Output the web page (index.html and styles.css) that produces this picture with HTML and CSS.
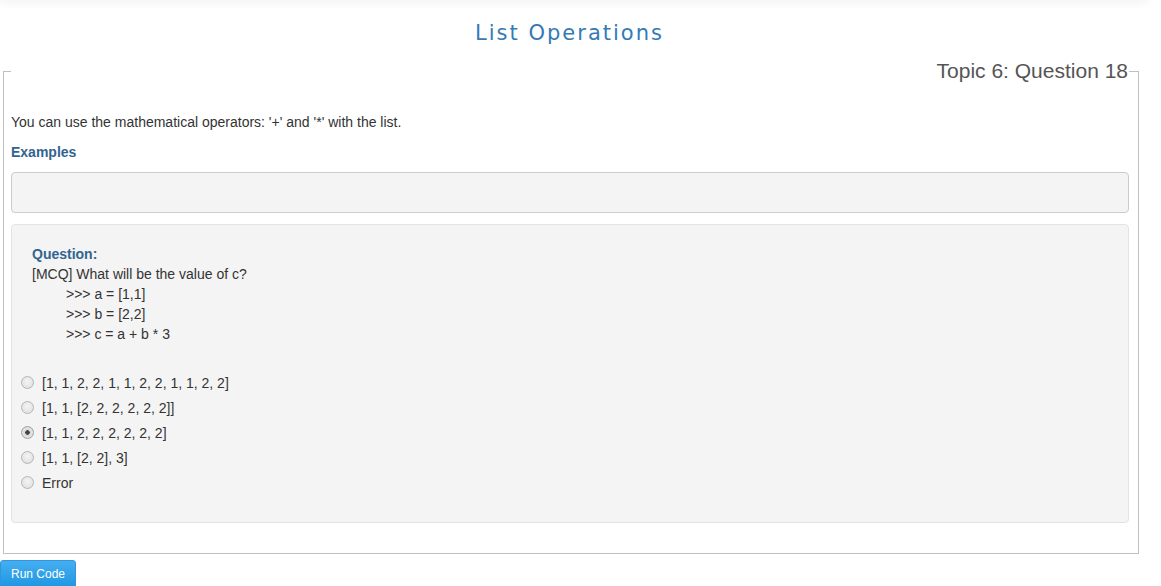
FILE: index.html
```html
<!DOCTYPE html>
<html>
<head>
<meta charset="utf-8">
<link rel="stylesheet" href="styles.css">
</head>
<body>
<div class="topbar"></div>
<h1 class="title">List Operations</h1>
<fieldset class="panel">
  <legend class="legend">Topic 6: Question 18</legend>
  <p class="intro">You can use the mathematical operators: '+' and '*' with the list.</p>
  <h4 class="examples-label">Examples</h4>
  <div class="examples-box"></div>
  <div class="well">
    <div class="q-label">Question:</div>
    <div class="q-text">[MCQ] What will be the value of c?</div>
    <div class="code">&gt;&gt;&gt; a = [1,1]</div>
    <div class="code">&gt;&gt;&gt; b = [2,2]</div>
    <div class="code">&gt;&gt;&gt; c = a + b * 3</div>
    <div class="options">
      <label class="option"><input type="radio" name="q" class="radio"> [1, 1, 2, 2, 1, 1, 2, 2, 1, 1, 2, 2]</label>
      <label class="option"><input type="radio" name="q" class="radio"> [1, 1, [2, 2, 2, 2, 2, 2]]</label>
      <label class="option"><input type="radio" name="q" class="radio" checked> [1, 1, 2, 2, 2, 2, 2, 2]</label>
      <label class="option"><input type="radio" name="q" class="radio"> [1, 1, [2, 2], 3]</label>
      <label class="option"><input type="radio" name="q" class="radio"> Error</label>
    </div>
  </div>
</fieldset>
<button class="run-btn">Run Code</button>
</body>
</html>
```

FILE: styles.css
```css
html, body {
  margin: 0;
  padding: 0;
  background: #fff;
  font-family: "Liberation Sans", Arial, sans-serif;
  color: #333;
}
.topbar {
  height: 0;
  width: 1146px;
  box-shadow: 0 0 9px 2px rgba(0, 0, 0, 0.09);
}
.title {
  margin: 19px 0 0 0;
  text-align: center;
  font-family: "DejaVu Sans", Verdana, sans-serif;
  font-weight: normal;
  font-size: 21px;
  letter-spacing: 2px;
  line-height: 28px;
  color: #337ab7;
  padding-right: 22px;
}
.panel {
  margin: 13px 22px 0 3px;
  padding: 0 9px 30px 7px;
  border: 1px solid #c0c0c0;
}
.legend {
  width: 100%;
  box-sizing: border-box;
  padding: 0 1px 0 0;
  text-align: right;
  font-size: 21px;
  line-height: 22px;
  color: #555;
  background: #fff;
}
.intro {
  margin: 31px 0 0 0;
  font-size: 14px;
  line-height: 18px;
}
.examples-label {
  margin: 12px 0 0 0;
  font-size: 14px;
  line-height: 18px;
  font-weight: bold;
  color: #31658f;
}
.examples-box {
  margin-top: 11px;
  height: 39px;
  background: #f4f4f4;
  border: 1px solid #ccc;
  border-radius: 4px;
}
.well {
  margin-top: 11px;
  height: 297px;
  box-sizing: content-box;
  padding: 0;
  background: #f4f4f4;
  border: 1px solid #e3e3e3;
  border-radius: 4px;
  font-size: 14px;
}
.q-label {
  margin: 19px 0 0 20px;
  font-weight: bold;
  color: #31658f;
  line-height: 20px;
}
.q-text {
  margin-left: 20px;
  line-height: 20px;
}
.code {
  margin-left: 54px;
  line-height: 20px;
}
.options {
  margin-top: 26px;
  padding-left: 9px;
}
.option {
  display: flex;
  align-items: center;
  height: 25px;
  gap: 8px;
}
.radio {
  appearance: none;
  -webkit-appearance: none;
  margin: 0;
  width: 13px;
  height: 13px;
  border-radius: 50%;
  border: 1px solid #b5b5b5;
  background: radial-gradient(circle at 50% 40%, #f4f4f4 0%, #dcdcdc 100%);
  box-sizing: border-box;
  flex: none;
}
.radio:checked {
  background: radial-gradient(circle, #444 0, #444 2px, #dcdcdc 2.5px, #e6e6e6 100%);
  border-color: #a0a0a0;
}
.run-btn {
  display: block;
  margin-top: 6px;
  width: 76px;
  height: 30px;
  border: 1px solid #2d96dc;
  border-radius: 3px 3px 0 0;
  background: linear-gradient(#45aef0, #1c95e2);
  color: #fff;
  font-family: "Liberation Sans", Arial, sans-serif;
  font-size: 12px;
  padding: 0 0 2px 0;
  text-align: center;
}
```
